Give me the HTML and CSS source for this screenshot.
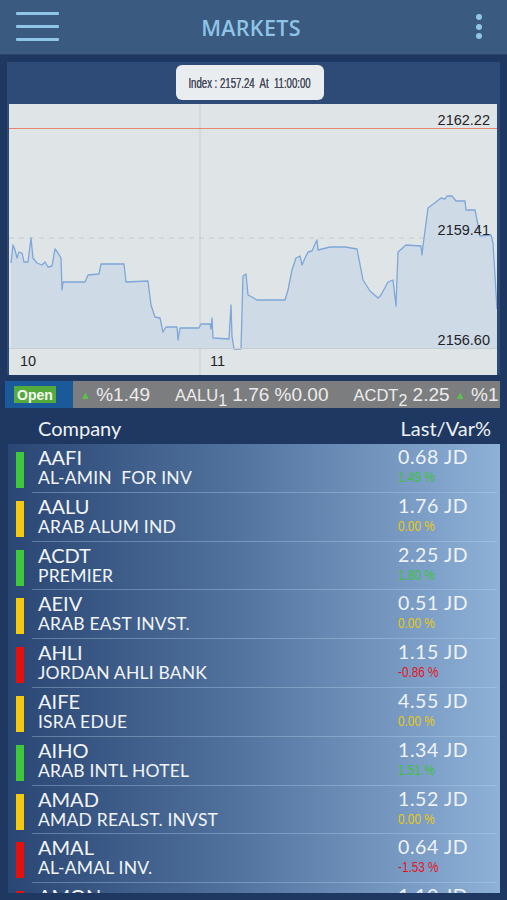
FILE: index.html
```html
<!DOCTYPE html>
<html>
<head>
<meta charset="utf-8">
<link rel="stylesheet" href="styles.css">
</head>
<body>
<header class="topbar">
  <div class="burger"><span></span><span></span><span></span></div>
  <div class="title">MARKETS</div>
  <div class="kebab"><span></span><span></span><span></span></div>
</header>

<section class="panel">
  <div class="tip-row"><div class="tip"><span>Index : 2157.24&nbsp; At&nbsp; 11:00:00</span></div></div>
  <svg class="chart" width="488" height="271" viewBox="9 104 488 271">
    <rect x="9" y="104" width="488" height="271" fill="#dfe5e7"/>
    <line x1="200" y1="104" x2="200" y2="375" stroke="#c7cdd1" stroke-width="1"/>
    <line x1="9" y1="238" x2="497" y2="238" stroke="#c4cbd0" stroke-width="1" stroke-dasharray="5 5"/>
    <polygon fill="#ccd9e7" fill-opacity="0.9" points="11,263 13,245 15,250 17,258 19,252 22,253 24,262 28,262 31,238 33,258 37,263 42,265 45,262 48,267 52,266 55,249 58,253 61,258 62,290 63,282 85,282 88,275 99,274 101,264 124,264 126,282 148,281 151,305 155,317 160,318 163,332 166,327 177,327 178,340 180,328 199,328 201,324 210,324 211,329 212,318 213,338 229,339 231,305 232,336 234,349 241,349 243,276 246,274 248,295 252,297 257,300 262,300 285,300 288,290 292,270 296,258 300,256 302,265 305,258 308,252 312,251 315,244 317,240 318,250 322,249 330,247 345,247 357,249 363,280 370,291 378,298 381,295 388,282 393,280 396,306 398,252 406,245 421,246 422,255 423,246 428,208 436,202 441,198 445,199 447,196 452,196 456,201 465,201 466,210 475,210 478,225 480,236 491,235 493,243 497,309 497,348 11,348"/>
    <polyline fill="none" stroke="#7ea6d8" stroke-width="1.3" stroke-linejoin="round" points="11,263 13,245 15,250 17,258 19,252 22,253 24,262 28,262 31,238 33,258 37,263 42,265 45,262 48,267 52,266 55,249 58,253 61,258 62,290 63,282 85,282 88,275 99,274 101,264 124,264 126,282 148,281 151,305 155,317 160,318 163,332 166,327 177,327 178,340 180,328 199,328 201,324 210,324 211,329 212,318 213,338 229,339 231,305 232,336 234,349 241,349 243,276 246,274 248,295 252,297 257,300 262,300 285,300 288,290 292,270 296,258 300,256 302,265 305,258 308,252 312,251 315,244 317,240 318,250 322,249 330,247 345,247 357,249 363,280 370,291 378,298 381,295 388,282 393,280 396,306 398,252 406,245 421,246 422,255 423,246 428,208 436,202 441,198 445,199 447,196 452,196 456,201 465,201 466,210 475,210 478,225 480,236 491,235 493,243 497,309"/>
    <line x1="9" y1="128.5" x2="497" y2="128.5" stroke="#e8856e" stroke-width="1.2"/>
    <line x1="9" y1="348.5" x2="497" y2="348.5" stroke="#c6cdd3" stroke-width="1"/>
    <g class="axis">
      <text x="490" y="125" text-anchor="end">2162.22</text>
      <text x="490" y="235" text-anchor="end">2159.41</text>
      <text x="490" y="345" text-anchor="end">2156.60</text>
      <text x="20" y="366">10</text>
      <text x="210" y="366">11</text>
    </g>
  </svg>
</section>

<div class="ticker">
  <div class="status"><span class="open">Open</span></div>
  <div class="tape">
    <span class="seg"><span class="up">&#9650;</span> %1.49</span>
    <span class="seg"><span class="sym">AALU<sub>1</sub></span> 1.76 %0.00</span>
    <span class="seg"><span class="sym">ACDT<sub>2</sub></span> 2.25 <span class="up">&#9650;</span> %1.80</span>
  </div>
</div>

<div class="list-head">
  <span>Company</span>
  <span>Last/Var%</span>
</div>

<div class="list">
  <div class="row"><i class="bar g"></i><div class="cell"><div class="nm"><b>AAFI</b><span>AL-AMIN&nbsp; FOR INV</span></div><div class="px"><b>0.68 JD</b><span class="pc pg">1.49 %</span></div></div></div>
  <div class="row"><i class="bar y"></i><div class="cell"><div class="nm"><b>AALU</b><span>ARAB ALUM IND</span></div><div class="px"><b>1.76 JD</b><span class="pc py">0.00 %</span></div></div></div>
  <div class="row"><i class="bar g"></i><div class="cell"><div class="nm"><b>ACDT</b><span>PREMIER</span></div><div class="px"><b>2.25 JD</b><span class="pc pg">1.80 %</span></div></div></div>
  <div class="row"><i class="bar y"></i><div class="cell"><div class="nm"><b>AEIV</b><span>ARAB EAST INVST.</span></div><div class="px"><b>0.51 JD</b><span class="pc py">0.00 %</span></div></div></div>
  <div class="row"><i class="bar r"></i><div class="cell"><div class="nm"><b>AHLI</b><span>JORDAN AHLI BANK</span></div><div class="px"><b>1.15 JD</b><span class="pc pr">-0.86 %</span></div></div></div>
  <div class="row"><i class="bar y"></i><div class="cell"><div class="nm"><b>AIFE</b><span>ISRA EDUE</span></div><div class="px"><b>4.55 JD</b><span class="pc py">0.00 %</span></div></div></div>
  <div class="row"><i class="bar g"></i><div class="cell"><div class="nm"><b>AIHO</b><span>ARAB INTL HOTEL</span></div><div class="px"><b>1.34 JD</b><span class="pc pg">1.51 %</span></div></div></div>
  <div class="row"><i class="bar y"></i><div class="cell"><div class="nm"><b>AMAD</b><span>AMAD REALST. INVST</span></div><div class="px"><b>1.52 JD</b><span class="pc py">0.00 %</span></div></div></div>
  <div class="row"><i class="bar r"></i><div class="cell"><div class="nm"><b>AMAL</b><span>AL-AMAL INV.</span></div><div class="px"><b>0.64 JD</b><span class="pc pr">-1.53 %</span></div></div></div>
  <div class="row"><i class="bar r"></i><div class="cell"><div class="nm"><b>AMON</b><span>AL-AMAL INV.</span></div><div class="px"><b>1.10 JD</b><span class="pc pr">-0.90 %</span></div></div></div>
</div>
</body>
</html>
```

FILE: styles.css
```css
* { box-sizing: border-box; }
html, body { margin: 0; padding: 0; }
body {
  width: 507px;
  height: 900px;
  overflow: hidden;
  background: #1f3861;
  font-family: "Liberation Sans", Arial, sans-serif;
}

.topbar {
  height: 55px;
  background: #3a5a80;
  border-bottom: 1px solid #2a4569;
  display: grid;
  grid-template-columns: 1fr auto 1fr;
  align-items: center;
  padding: 0 25px 0 16px;
}
.burger { width: 43px; display: flex; flex-direction: column; gap: 9.5px; margin-top: -1px; }
.burger span { display: block; height: 3.5px; background: #8fc5e6; border-radius: 1px; }
.title {
  font-family: "Open Sans", sans-serif;
  font-weight: 600;
  font-size: 21.5px;
  color: #8ec4e6;
  letter-spacing: 0.3px;
  margin-left: 4px;
}
.kebab { justify-self: end; display: flex; flex-direction: column; gap: 3.5px; margin-top: -1px; }
.kebab span { width: 6px; height: 6px; border-radius: 50%; background: #8fc5e6; }

.panel {
  margin: 7px 7px 0 7px;
  height: 313px;
  background: #2e4b77;
  padding: 0 3px 0 2px;
  display: flex;
  flex-direction: column;
}
.tip-row { height: 42px; display: flex; justify-content: center; padding-top: 3px; padding-right: 7px; }
.tip {
  height: 35px;
  width: 148px;
  background: #e9edef;
  border-radius: 6px;
  display: flex;
  align-items: center;
  justify-content: center;
  overflow: hidden;
  white-space: nowrap;
}
.tip span {
  display: inline-block;
  font-family: "Liberation Sans", Arial, sans-serif;
  font-size: 15.5px;
  color: #454b5a;
  transform: scaleX(0.62);
  flex: none;
  text-shadow: 0 0 0.4px #454b5a;
}
.chart { display: block; }
.axis text { font-family: "Liberation Sans", Arial, sans-serif; font-size: 14.5px; fill: #1f2326; }

.ticker {
  margin: 6px 7px 0 5px;
  height: 27px;
  display: flex;
}
.status { width: 68px; background: #1a5a9b; display: flex; align-items: center; padding-left: 9px; }
.open {
  background: #55aa3e;
  color: #f4f8f0;
  font-weight: bold;
  font-size: 14px;
  height: 17px;
  width: 42px;
  display: flex;
  align-items: center;
  justify-content: center;
}
.tape {
  flex: 1;
  background: #7c7d7f;
  color: #ececec;
  font-size: 19px;
  line-height: 27px;
  white-space: nowrap;
  overflow: hidden;
  padding-left: 7px;
  display: flex;
  gap: 25px;
}
.seg { flex: none; }
.tape .up { color: #5cc04a; font-size: 11px; vertical-align: 2px; }
.tape .sym { font-size: 16.5px; }
.tape sub { font-size: 16px; vertical-align: -5px; line-height: 0; }

.list-head {
  height: 36px;
  display: flex;
  justify-content: space-between;
  align-items: center;
  padding: 3px 16px 0 38px;
  font-family: Lato, sans-serif;
  font-size: 20px;
  color: #eef2f6;
}

.list {
  margin: 0 7px 0 8px;
  height: 449px;
  overflow: hidden;
  background: linear-gradient(to right, #2a4674 0%, #50719c 45%, #8eb1d8 100%);
}
.row { height: 48.8px; display: flex; }
.bar { display: block; width: 8px; height: 36px; margin: 8px 8px 0 8px; }
.bar.g { background: #3fc83a; }
.bar.y { background: #f3c911; }
.bar.r { background: #e3100e; }
.cell {
  flex: 1;
  display: flex;
  margin-right: 3px;
  padding-left: 6px;
  border-bottom: 1px solid rgba(190, 215, 240, 0.35);
}
.nm { flex: 1; display: flex; flex-direction: column; padding-top: 2px; font-family: Lato, sans-serif; color: #f2f5f8; }
.nm b { font-weight: 400; font-size: 20px; line-height: 22px; }
.nm span { font-size: 17.5px; line-height: 20px; letter-spacing: 0.2px; }
.px { width: 99px; display: flex; flex-direction: column; align-items: flex-start; padding-top: 2px; font-family: Lato, sans-serif; }
.px b { font-weight: 400; font-size: 19.5px; line-height: 22px; color: #f0f3f6; letter-spacing: 0.6px; }
.pc {
  display: inline-block;
  font-family: "Liberation Sans", Arial, sans-serif;
  font-size: 15.5px;
  line-height: 18px;
  transform: scaleX(0.76);
  transform-origin: left center;
}
.pg { color: #3dc23d; }
.py { color: #e9c90f; }
.pr { color: #e4141c; }
```
